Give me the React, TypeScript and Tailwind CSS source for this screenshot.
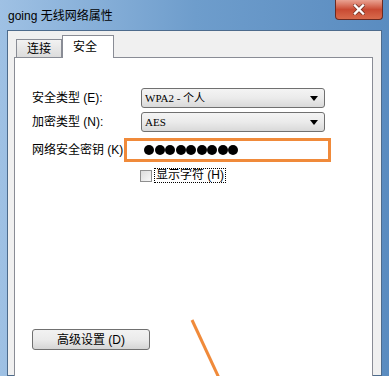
import React from "react";

const font = { fontFamily: '"Liberation Sans", "Noto Sans CJK SC", sans-serif' };

function Select({ text }: { text: string }) {
  return (
    <div className="flex h-[20px] w-[184px] items-center justify-between rounded-[3px] border border-[#707070] bg-gradient-to-b from-[#f4f4f4] via-[#ebebeb] to-[#d9d9d9] pl-[3px] pr-[6px]">
      <span className="text-[11px] leading-none text-black" style={{ fontFamily: '"Liberation Serif", "Noto Sans CJK SC", serif' }}>{text}</span>
      <svg width="8" height="5" viewBox="0 0 8 5"><path d="M0 0h8L4 5z" fill="#000" /></svg>
    </div>
  );
}

export default function App() {
  return (
    <div className="relative h-[376px] w-[389px] overflow-hidden bg-gradient-to-r from-[#9fc1e4] via-[#6e9dcc] to-[#5a8cc0]" style={font}>
      {/* title bar */}
      <div className="flex h-[30px] items-center justify-between pl-[8px]">
        <span className="pt-[2px] text-[12px] text-black">going 无线网络属性</span>
        <div className="mr-[6px] flex h-[20px] w-[48px] items-center justify-center self-start rounded-b-[4px] border border-t-0 border-[#6b2a22] bg-gradient-to-b from-[#e9a292] via-[#c94a33] to-[#d86a4c]">
          <svg width="12" height="11" viewBox="0 0 12 11">
            <path d="M2 1.5L10 9.5M10 1.5L2 9.5" stroke="#3a1a14" strokeWidth="4" strokeLinecap="square" opacity="0.55" />
            <path d="M2 1.5L10 9.5M10 1.5L2 9.5" stroke="#fff" strokeWidth="2.4" strokeLinecap="square" />
          </svg>
        </div>
      </div>
      {/* client area */}
      <div className="ml-[7px] mr-[7px] h-[346px] border border-[#4d6b8c] bg-[#f0f0f0] pl-[6px] pr-[8px] pt-[4px]">
        {/* tabs */}
        <div className="flex h-[22px] items-end pl-[2px]">
          <div className="flex h-[18px] w-[46px] items-center justify-center border border-b-0 border-[#898c95] bg-gradient-to-b from-[#f2f2f2] to-[#dcdcdc] text-[12px] text-black">
            连接
          </div>
          <div className="relative z-10 -mb-px flex h-[23px] w-[52px] items-start justify-center border border-b-0 border-[#898c95] bg-white pt-[2px] text-[12px] text-black">
            <span className="-ml-[6px]">安全</span>
          </div>
        </div>
        {/* panel */}
        <div className="relative h-[330px] border border-[#898c95] bg-white pl-[17px] pt-[30px] text-[12px] text-black">
          <div className="flex flex-col gap-[4px]">
            <div className="flex items-center">
              <span className="w-[109px]">安全类型 (E):</span>
              <Select text="WPA2 - 个人" />
            </div>
            <div className="flex items-center">
              <span className="w-[109px]">加密类型 (N):</span>
              <Select text="AES" />
            </div>
            <div className="mt-[3px] flex h-[22px] items-center">
              <span className="w-[109px]">网络安全密钥 (K)</span>
              <div className="flex h-[21px] w-[184px] items-center gap-[0.5px] pl-[3px]">
                {Array.from({ length: 9 }).map((_, i) => (
                  <span key={i} className="h-[10px] w-[10px] rounded-full bg-black" />
                ))}
              </div>
            </div>
            <div className="mt-[3px] flex items-center pl-[108px]">
              <span className="h-[12px] w-[12px] border border-[#8f8f8f] bg-gradient-to-br from-[#dcdcdc] to-[#f8f8f8]" />
              <span className="ml-[2px] border border-dotted border-black px-[1px] text-[12px] leading-[13px]">显示字符 (H)</span>
            </div>
          </div>
          <div className="mt-[146px] flex h-[21px] w-[118px] items-center justify-center rounded-[3px] border border-[#707070] bg-gradient-to-b from-[#f2f2f2] via-[#ebebeb] to-[#d5d5d5] text-[12px]">
            高级设置 (D)
          </div>
          {/* annotation box */}
          <div className="absolute left-[109px] top-[80px] h-[24px] w-[207px] border-[3px] border-[#f08a3a]" />
        </div>
      </div>
      {/* annotation line */}
      <svg className="absolute left-0 top-0" width="389" height="376">
        <line x1="192" y1="320" x2="219" y2="378" stroke="#f08a3a" strokeWidth="3" />
      </svg>
    </div>
  );
}
